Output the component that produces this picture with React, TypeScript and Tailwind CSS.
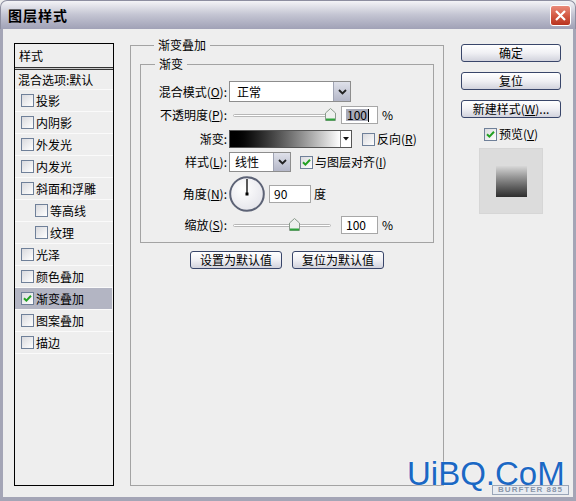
import React from "react";

function Check({ checked }: { checked?: boolean }) {
  return (
    <span className="inline-flex w-[13px] h-[13px] shrink-0 items-center justify-center border border-[#6f8099] bg-gradient-to-br from-[#d9dade] to-white">
      {checked && (
        <svg width="9" height="9" viewBox="0 0 9 9">
          <path d="M1 4.2 L3.4 6.6 L8 1.8" stroke="#21a121" strokeWidth="2" fill="none" />
        </svg>
      )}
    </span>
  );
}

function Btn({ children, className = "" }: { children: React.ReactNode; className?: string }) {
  return (
    <div
      className={`h-[18px] flex items-center justify-center rounded-[3px] border border-[#39466a] bg-gradient-to-b from-white via-[#f0f0f4] to-[#d2d3dd] text-[12px] leading-none text-black ${className}`}
    >
      {children}
    </div>
  );
}

function DropBtn() {
  return (
    <div className="w-[17px] h-full flex items-center justify-center bg-gradient-to-b from-[#dfe1ea] to-[#b4b7c8] border-l border-[#a0a4b4]">
      <svg width="9" height="6" viewBox="0 0 9 6">
        <path d="M1 1 L4.5 4.5 L8 1" stroke="#222" strokeWidth="1.8" fill="none" />
      </svg>
    </div>
  );
}

function Thumb() {
  return (
    <svg width="11" height="13" viewBox="0 0 11 13">
      <path d="M0.5 5 L5.5 0.5 L10.5 5 L10.5 12.5 L0.5 12.5 Z" fill="#eef0ee" stroke="#8a9a8c" />
      <path d="M1 11.5 H10" stroke="#2da33a" strokeWidth="2" />
    </svg>
  );
}

function Slider({ pos }: { pos: number }) {
  return (
    <div className="relative w-[108px] h-[18px]">
      <div className="absolute left-[4px] right-[6px] top-[8px] h-[3px] rounded-full border border-[#b7b7b7] bg-white" />
      <div className="absolute top-[2px]" style={{ left: pos }}>
        <Thumb />
      </div>
    </div>
  );
}

function Row({ label, children, h = 18 }: { label: React.ReactNode; children?: React.ReactNode; h?: number }) {
  return (
    <div className="flex items-center" style={{ height: h }}>
      <div className="w-[87px] text-right pr-[1px] text-[12px] leading-none whitespace-nowrap">{label}</div>
      <div className="ml-[1px] flex items-center gap-0">{children}</div>
    </div>
  );
}

function Input({ children, w = 37 }: { children: React.ReactNode; w?: number }) {
  return (
    <div
      className="h-[18px] flex items-center pl-[4px] bg-white border border-[#a7a7a7] text-[12px] leading-none"
      style={{ width: w }}
    >
      {children}
    </div>
  );
}

const items: { t: string; indent?: boolean; checked?: boolean; sel?: boolean }[] = [
  { t: "投影" },
  { t: "内阴影" },
  { t: "外发光" },
  { t: "内发光" },
  { t: "斜面和浮雕" },
  { t: "等高线", indent: true },
  { t: "纹理", indent: true },
  { t: "光泽" },
  { t: "颜色叠加" },
  { t: "渐变叠加", checked: true, sel: true },
  { t: "图案叠加" },
  { t: "描边" },
];

export default function App() {
  return (
    <div className="w-[576px] h-[501px] flex flex-col bg-[#eeeeee] font-['Noto_Sans_CJK_SC','Noto_Sans',sans-serif] text-black overflow-hidden relative">
      {/* title bar */}
      <div className="h-[29px] shrink-0 flex items-center justify-between pl-[7px] pr-[4px] rounded-t-[7px] border border-b-0 border-[#8d8ea0] bg-gradient-to-b from-[#f4f4f7] via-[#c3c4d2] to-[#a0a1b6]">
        <span className="text-[14px] font-bold leading-none tracking-[1px]">图层样式</span>
        <div className="w-[21px] h-[21px] rounded-[3px] border border-white bg-gradient-to-b from-[#e98a7a] via-[#d45a44] to-[#b8321e] flex items-center justify-center">
          <svg width="13" height="13" viewBox="0 0 13 13">
            <path d="M2 2 L11 11 M11 2 L2 11" stroke="white" strokeWidth="2.2" />
          </svg>
        </div>
      </div>

      {/* body */}
      <div className="flex-1 flex items-start border-x-[3px] border-b-[4px] border-[#a4a5b6] pl-[11px] relative">
        {/* left list */}
        <div className="mt-[14px] w-[100px] h-[443px] border border-black bg-[#eeeeee] flex flex-col">
          <div className="h-[23px] flex items-center pl-[4px] text-[12px] leading-none">样式</div>
          <div className="h-[3px] border-y border-[#333] bg-[#c8c8c8]" />
          <div className="h-[20px] flex items-center pl-[3px] text-[12px] leading-none whitespace-nowrap border-b border-[#fafafa]">
            混合选项:默认
          </div>
          {items.map((it) => (
            <div
              key={it.t}
              className={`h-[22px] flex items-center gap-[1px] text-[12px] leading-none border-b border-[#fafafa] ${
                it.indent ? "pl-[20px]" : "pl-[6px]"
              } ${it.sel ? "bg-[#b3b5c3] mr-[1px]" : ""}`}
            >
              <Check checked={it.checked} />
              <span className="ml-[1px]">{it.t}</span>
            </div>
          ))}
        </div>

        {/* middle */}
        <div className="ml-[16px] mt-[8px] w-[314px] flex flex-col">
          <fieldset className="h-[449px] border border-[#a3a3a3] px-[9px]">
            <legend className="ml-[14px] px-[4px] text-[12px] leading-[16px]">渐变叠加</legend>
            <fieldset className="mt-[3px] border border-[#a3a3a3] pt-[9px] pb-[8px]">
              <legend className="ml-[14px] px-[4px] text-[12px] leading-[16px]">渐变</legend>
              <div className="flex flex-col">
                <Row
                  h={21}
                  label={
                    <>
                      混合模式(<u>O</u>):
                    </>
                  }
                >
                  <div className="w-[122px] h-[21px] flex border border-[#8d8d8d] bg-white">
                    <div className="flex-1 flex items-center pl-[7px] text-[12px] leading-none">正常</div>
                    <DropBtn />
                  </div>
                </Row>
                <div className="h-[4px]" />
                <Row
                  label={
                    <>
                      不透明度(<u>P</u>):
                    </>
                  }
                >
                  <Slider pos={96} />
                  <div className="ml-[4px]">
                    <Input>
                      <span className="bg-[#a9abb8] px-[1px]">100</span>
                      <span className="w-px h-[13px] bg-black" />
                    </Input>
                  </div>
                  <span className="ml-[4px] text-[12px] leading-none">%</span>
                </Row>
                <div className="h-[6px]" />
                <Row label="渐变:">
                  <div className="w-[123px] h-[18px] flex border border-[#555]">
                    <div className="flex-1 bg-gradient-to-r from-black to-white" />
                    <div className="w-[11px] bg-white border-l border-[#888] flex items-center justify-center">
                      <svg width="6" height="4" viewBox="0 0 6 4">
                        <path d="M0 0 H6 L3 3.5 Z" fill="#111" />
                      </svg>
                    </div>
                  </div>
                  <div className="ml-[10px] flex items-center gap-[2px] text-[12px] leading-none">
                    <Check />
                    <span>
                      反向(<u>R</u>)
                    </span>
                  </div>
                </Row>
                <div className="h-[4px]" />
                <Row
                  h={20}
                  label={
                    <>
                      样式(<u>L</u>):
                    </>
                  }
                >
                  <div className="w-[62px] h-[20px] flex border border-[#8d8d8d] bg-white">
                    <div className="flex-1 flex items-center pl-[5px] text-[12px] leading-none">线性</div>
                    <DropBtn />
                  </div>
                  <div className="ml-[9px] flex items-center gap-[2px] text-[12px] leading-none">
                    <Check checked />
                    <span>
                      与图层对齐(<u>I</u>)
                    </span>
                  </div>
                </Row>
                <div className="h-[4px]" />
                <Row
                  h={36}
                  label={
                    <>
                      角度(<u>N</u>):
                    </>
                  }
                >
                  <svg width="36" height="36" viewBox="0 0 36 36">
                    <defs>
                      <radialGradient id="dg" cx="0.4" cy="0.35" r="0.7">
                        <stop offset="0" stopColor="#ffffff" />
                        <stop offset="1" stopColor="#e4e4ea" />
                      </radialGradient>
                    </defs>
                    <circle cx="18" cy="18" r="16.8" fill="url(#dg)" stroke="#5d6376" strokeWidth="2" />
                    <line x1="18" y1="18" x2="18" y2="3" stroke="#000" strokeWidth="1.3" />
                    <rect x="16.5" y="16.5" width="3" height="3" fill="#000" />
                  </svg>
                  <div className="ml-[4px]">
                    <Input w={42}>90</Input>
                  </div>
                  <span className="ml-[3px] text-[12px] leading-none">度</span>
                </Row>
                <div className="h-[4px]" />
                <Row
                  label={
                    <>
                      缩放(<u>S</u>):
                    </>
                  }
                >
                  <Slider pos={60} />
                  <div className="ml-[4px]">
                    <Input>100</Input>
                  </div>
                  <span className="ml-[4px] text-[12px] leading-none">%</span>
                </Row>
              </div>
            </fieldset>
            <div className="mt-[8px] flex justify-center gap-[10px]">
              <Btn className="w-[92px]">设置为默认值</Btn>
              <Btn className="w-[92px]">复位为默认值</Btn>
            </div>
          </fieldset>
        </div>

        {/* right column */}
        <div className="ml-[17px] mt-[15px] w-[100px] flex flex-col items-center">
          <Btn className="w-[100px]">确定</Btn>
          <Btn className="w-[100px] mt-[10px]">复位</Btn>
          <Btn className="w-[100px] mt-[10px]">
            新建样式(<u>W</u>)...
          </Btn>
          <div className="mt-[8px] h-[16px] flex items-center gap-[2px] text-[12px] leading-none">
            <Check checked />
            <span>
              预览(<u>V</u>)
            </span>
          </div>
          <div className="mt-[6px] w-[64px] h-[66px] border border-[#d6d6d6] bg-[#dcdcdc] flex items-center justify-center">
            <div className="w-[31px] h-[31px] bg-gradient-to-b from-[#d8d8d8] to-[#2e2e2e]" />
          </div>
        </div>

        {/* watermark */}
        <div className="absolute left-[404px] top-[428px] text-[33px] leading-none text-[#1b68c4] font-['Liberation_Sans',sans-serif] [text-shadow:0_0_2px_#ffffff]">
          UiBQ.CoM
        </div>
        <div className="absolute left-[489px] top-[456px] w-[77px] h-[10px] border border-[#9aa6b8] bg-[#e8ecf2] text-[8px] leading-[8px] text-[#8a96a8] font-['Liberation_Sans',sans-serif] font-bold tracking-[1px] text-center">
          BURFTER 885
        </div>
      </div>
    </div>
  );
}
